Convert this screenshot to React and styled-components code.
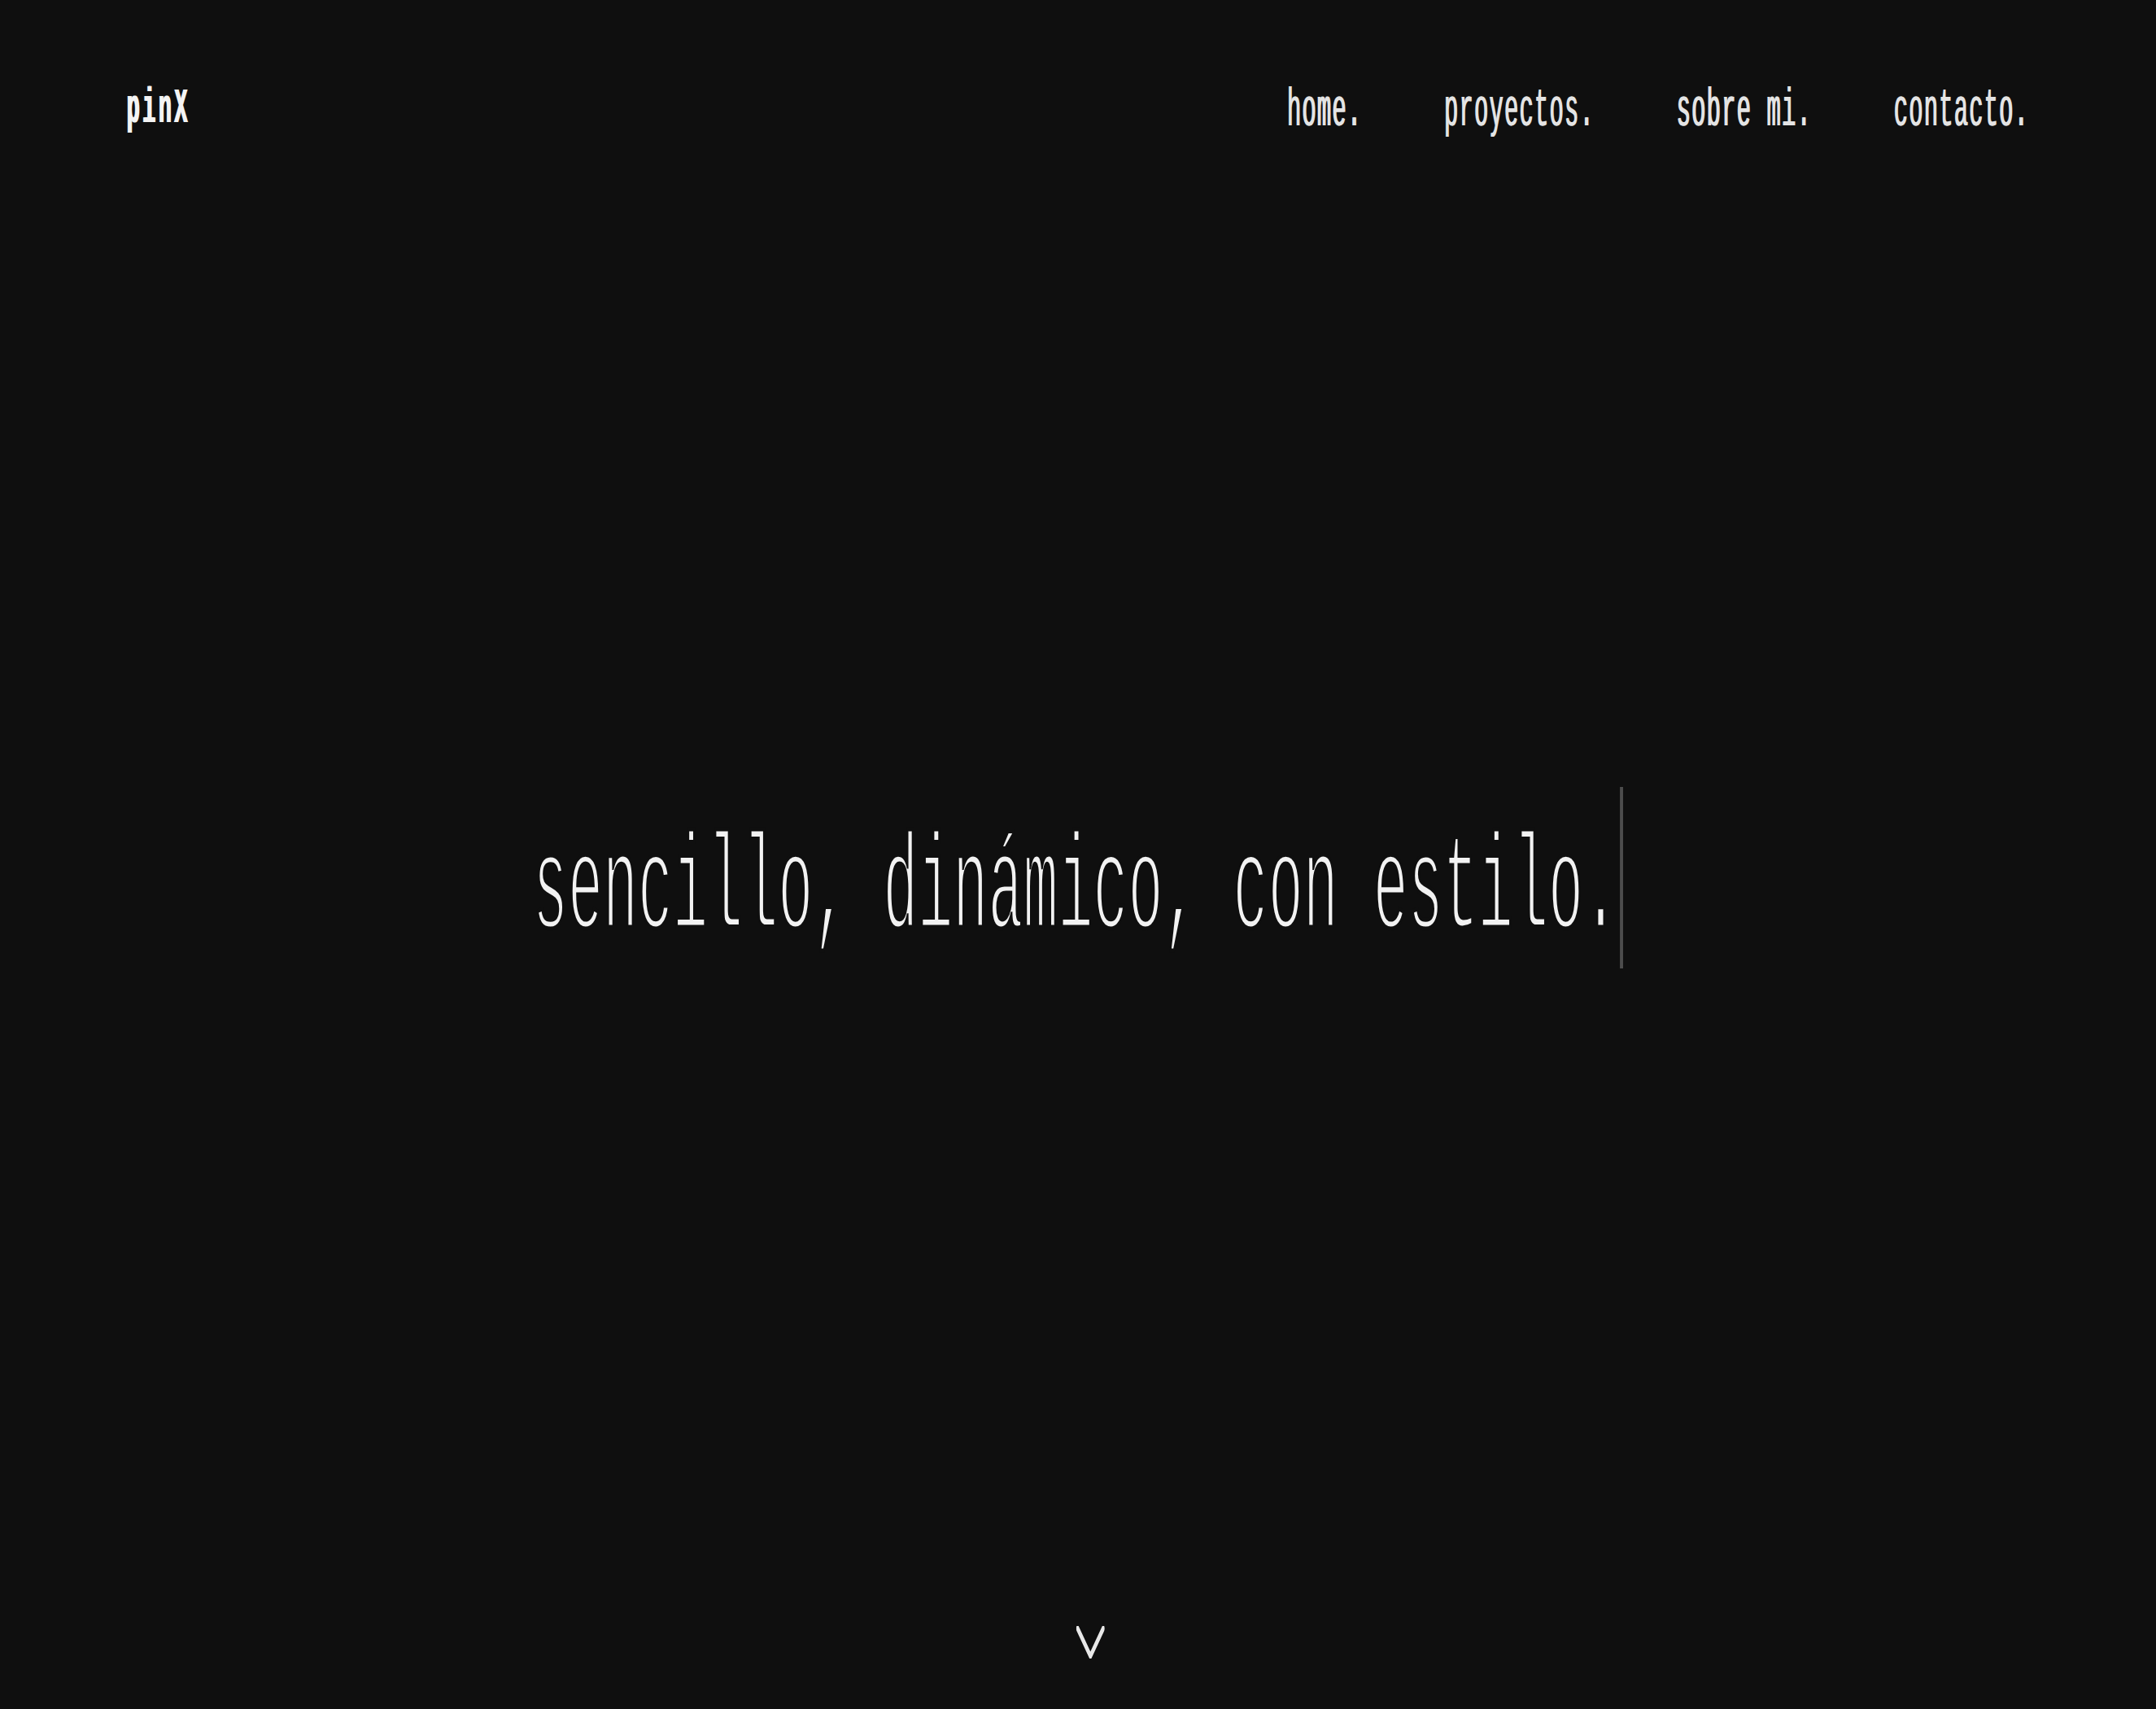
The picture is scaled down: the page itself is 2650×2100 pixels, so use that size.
import styled, { createGlobalStyle } from "styled-components";

// the whole page is drawn wide and squeezed sideways, like the narrow mono type of the shot
const SQUEEZE = 0.432;
const BG = "#0f0f0f";

const GlobalStyle = createGlobalStyle`
  html, body {
    margin: 0;
    padding: 0;
    overflow: hidden;
    background-color: ${BG};
  }
`;

const Viewport = styled.div`
  width: 100vw;
  height: 100vh;
  overflow: hidden;
  background-color: ${BG};
`;

const Stage = styled.div`
  width: ${100 / SQUEEZE}vw;
  height: 100%;
  transform: scaleX(${SQUEEZE});
  transform-origin: left top;
  display: flex;
  flex-direction: column;
  font-family: "Liberation Mono", "DejaVu Sans Mono", monospace;
  color: #ededed;
`;

const Header = styled.header`
  height: 193px;
  box-sizing: border-box;
  padding: 103px 362px 0 359px;
  display: flex;
  justify-content: space-between;
  align-items: flex-start;
`;

const Logo = styled.a`
  font-size: 62px;
  line-height: 1;
  font-weight: 700;
  letter-spacing: 8px;
  color: #f4f4f4;
  text-decoration: none;
  text-shadow: 3px 0 0 #f4f4f4;
`;

const Nav = styled.nav`
  display: flex;
  gap: 233px;
`;

const NavLink = styled.a`
  font-size: 67px;
  line-height: 1;
  letter-spacing: 2.6px;
  color: #e4e4e4;
  text-decoration: none;
  white-space: pre;
  text-shadow: 2.5px 0 0 #e4e4e4;
`;

const Hero = styled.main`
  flex: 1;
  display: flex;
  align-items: center;
  justify-content: center;
`;

const Headline = styled.h1`
  margin: 0;
  display: flex;
  align-items: flex-start;
  font-weight: 400;
`;

// thin hairline look: a background-coloured stroke eats into the glyphs
const Typed = styled.span`
  font-size: 166px;
  line-height: 1.551;
  color: #f2f2f2;
  white-space: pre;
  -webkit-text-stroke: 5px ${BG};
`;

const Caret = styled.span`
  width: 9px;
  height: 223px;
  margin-left: 5px;
  background-color: #4d4d4d;
`;

const Footer = styled.footer`
  display: flex;
  justify-content: center;
  padding: 0 0 62px 70px;
`;

const ScrollDown = styled.a`
  display: block;
  width: 81px;
  height: 40px;
  color: #e8e8e8;
`;

const links = ["home.", "proyectos.", "sobre mi.", "contacto."];

const App = () => {
  return (
    <Viewport>
      <GlobalStyle />
      <Stage>
        <Header>
          <Logo href="#">pinX</Logo>
          <Nav>
            {links.map((l) => (
              <NavLink key={l} href="#">{l}</NavLink>
            ))}
          </Nav>
        </Header>
        <Hero>
          <Headline>
            <Typed>sencillo, dinámico, con estilo.</Typed>
            <Caret />
          </Headline>
        </Hero>
        <Footer>
          <ScrollDown href="#">
            <svg width="81" height="40" viewBox="0 0 81 40" fill="none">
              <polyline
                points="4,3 40.5,37 77,3"
                stroke="currentColor"
                strokeWidth="8"
                strokeLinecap="round"
                strokeLinejoin="miter"
              />
            </svg>
          </ScrollDown>
        </Footer>
      </Stage>
    </Viewport>
  );
};

export default App;
